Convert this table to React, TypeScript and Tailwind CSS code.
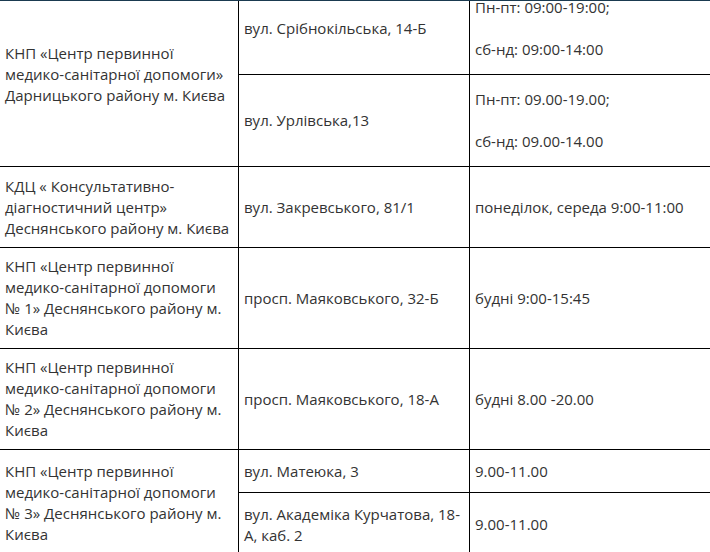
import React from 'react';

// Table of clinics: name, address, hours
const cell = 'border border-black px-[5px] py-[8px] align-middle';

export default function App() {
  return (
    <div
      className="w-[710px] h-[552px] overflow-hidden bg-white border-t border-[#1a3a50] text-[15px] leading-[21px] text-[#333]"
      style={{ fontFamily: '"Open Sans", "Noto Sans", sans-serif' }}
    >
      <table className="-mt-[19px] -ml-px w-[760px] border-collapse table-fixed">
        <colgroup>
          <col className="w-[239px]" />
          <col className="w-[231px]" />
          <col />
        </colgroup>
        <tbody>
          <tr className="h-[92px]">
            <td rowSpan={2} className={cell}>
              КНП «Центр первинної медико-санітарної допомоги» Дарницького району м. Києва
            </td>
            <td className={cell}>вул. Срібнокільська, 14-Б</td>
            <td className={cell}>
              <p>Пн-пт: 09:00-19:00;</p>
              <p>&nbsp;</p>
              <p>сб-нд: 09:00-14:00</p>
            </td>
          </tr>
          <tr className="h-[92px]">
            <td className={cell}>вул. Урлівська,13</td>
            <td className={cell}>
              <p>Пн-пт: 09.00-19.00;</p>
              <p>&nbsp;</p>
              <p>сб-нд: 09.00-14.00</p>
            </td>
          </tr>
          <tr className="h-[81px]">
            <td className={cell}>
              КДЦ « Консультативно-діагностичний центр» Деснянського району м. Києва
            </td>
            <td className={cell}>вул. Закревського, 81/1</td>
            <td className={cell}>понеділок, середа 9:00-11:00</td>
          </tr>
          <tr className="h-[101px]">
            <td className={cell}>
              КНП «Центр первинної медико-санітарної допомоги № 1» Деснянського району м. Києва
            </td>
            <td className={cell}>просп. Маяковського, 32-Б</td>
            <td className={cell}>будні 9:00-15:45</td>
          </tr>
          <tr className="h-[101px]">
            <td className={cell}>
              КНП «Центр первинної медико-санітарної допомоги № 2» Деснянського району м. Києва
            </td>
            <td className={cell}>просп. Маяковського, 18-А</td>
            <td className={cell}>будні 8.00 -20.00</td>
          </tr>
          <tr className="h-[43px]">
            <td rowSpan={2} className={cell}>
              КНП «Центр первинної медико-санітарної допомоги № 3» Деснянського району м. Києва
            </td>
            <td className={cell}>вул. Матеюка, 3</td>
            <td className={cell}>9.00-11.00</td>
          </tr>
          <tr className="h-[64px]">
            <td className={cell}>вул. Академіка Курчатова, 18-А, каб. 2</td>
            <td className={cell}>9.00-11.00</td>
          </tr>
        </tbody>
      </table>
    </div>
  );
}
